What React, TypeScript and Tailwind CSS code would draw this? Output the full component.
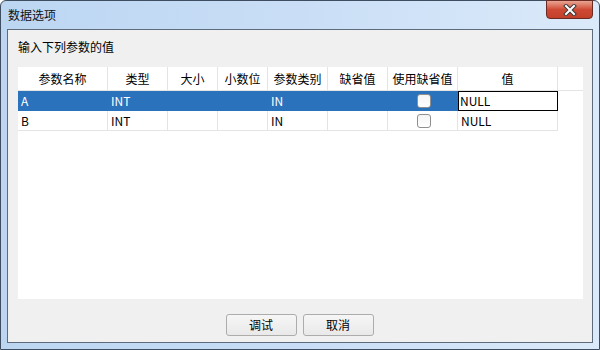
import React from "react";

const COLUMNS = [
  { title: "参数名称", width: "w-[90px]" },
  { title: "类型", width: "w-[60px]" },
  { title: "大小", width: "w-[50px]" },
  { title: "小数位", width: "w-[50px]" },
  { title: "参数类别", width: "w-[60px]" },
  { title: "缺省值", width: "w-[60px]" },
  { title: "使用缺省值", width: "w-[70px]" },
  { title: "值", width: "w-[100px]" },
];

const ROWS = [
  { name: "A", type: "INT", kind: "IN", value: "NULL", selected: true },
  { name: "B", type: "INT", kind: "IN", value: "NULL", selected: false },
];

function CloseButton() {
  return (
    <div className="-mt-[1px] w-[47px] h-[19px] rounded-b-[4px] border border-[#6b2b22] bg-gradient-to-b from-[#e8a493] via-[#cf4a34] to-[#c2402a] flex items-center justify-center">
      <svg width="14" height="12" viewBox="0 0 14 12">
        <path d="M3 2 L11 10 M11 2 L3 10" stroke="#3b3b3b" strokeWidth="4" strokeLinecap="square" />
        <path d="M3 2 L11 10 M11 2 L3 10" stroke="#ffffff" strokeWidth="2" strokeLinecap="square" />
      </svg>
    </div>
  );
}

function Checkbox() {
  return <div className="w-[14px] h-[14px] rounded-[3px] border border-[#8e8f8f] bg-gradient-to-b from-[#f4f4f4] to-[#ffffff]" />;
}

function DataRow({ row }: { row: (typeof ROWS)[number] }) {
  const line = row.selected ? "border-[#2a72bc]" : "border-[#e4e4e4]";
  const cell = `h-[20px] border-r border-b ${line} pl-[3px] flex items-center`;
  const text = row.selected ? "text-white" : "text-black";
  return (
    <div className={`flex self-start ${row.selected ? "bg-[#2a72bc]" : "bg-white"}`}>
      <div className={`${cell} w-[90px] ${text}`}>{row.name}</div>
      <div className={`${cell} w-[60px] ${text}`}>{row.type}</div>
      <div className={`${cell} w-[50px]`} />
      <div className={`${cell} w-[50px]`} />
      <div className={`${cell} w-[60px] ${text}`}>{row.kind}</div>
      <div className={`${cell} w-[60px]`} />
      <div className={`${cell} w-[70px] justify-center pl-0`}>
        <Checkbox />
      </div>
      {row.selected ? (
        <div className="h-[20px] w-[100px] border border-black bg-white pl-[1px] flex items-center text-black">{row.value}</div>
      ) : (
        <div className="h-[20px] w-[100px] border-r border-b border-[#e4e4e4] pl-[3px] flex items-center bg-white text-black">{row.value}</div>
      )}
    </div>
  );
}

export default function App() {
  return (
    <div
      className="w-[600px] h-[350px] rounded-t-[6px] border border-[#3e4d60] bg-gradient-to-r from-[#bcd6f2] via-[#c9def6] to-[#dbeafa] flex flex-col px-[6px] pb-[6px] text-[12px] text-black"
      style={{ fontFamily: '"Noto Sans CJK SC", "Noto Sans", sans-serif' }}
    >
      <div className="h-[28px] shrink-0 flex items-start justify-between">
        <span className="pl-[1px] pt-[6px] leading-[16px] text-[#111]">数据选项</span>
        <CloseButton />
      </div>

      <div className="flex-1 border border-[#5d6b7c] bg-[#f0f0f0] flex flex-col pl-[10px] pr-[9px] pt-[9px] pb-[6px]">
        <div className="h-[16px] leading-[16px]">输入下列参数的值</div>

        <div className="mt-[12px] flex-1 bg-white flex flex-col">
          <div className="h-[24px] flex border-b border-[#e4e4e4]">
            {COLUMNS.map((col) => (
              <div key={col.title} className={`${col.width} border-r border-[#e4e4e4] flex items-center justify-center`}>
                {col.title}
              </div>
            ))}
          </div>
          {ROWS.map((row) => (
            <DataRow key={row.name} row={row} />
          ))}
        </div>

        <div className="mt-[15px] flex justify-center gap-[6px] pr-[2px]">
          <button className="w-[71px] h-[22px] rounded-[3px] border border-[#acacac] bg-gradient-to-b from-[#f6f6f6] to-[#e9e9e9]">调试</button>
          <button className="w-[71px] h-[22px] rounded-[3px] border border-[#acacac] bg-gradient-to-b from-[#f6f6f6] to-[#e9e9e9]">取消</button>
        </div>
      </div>
    </div>
  );
}
